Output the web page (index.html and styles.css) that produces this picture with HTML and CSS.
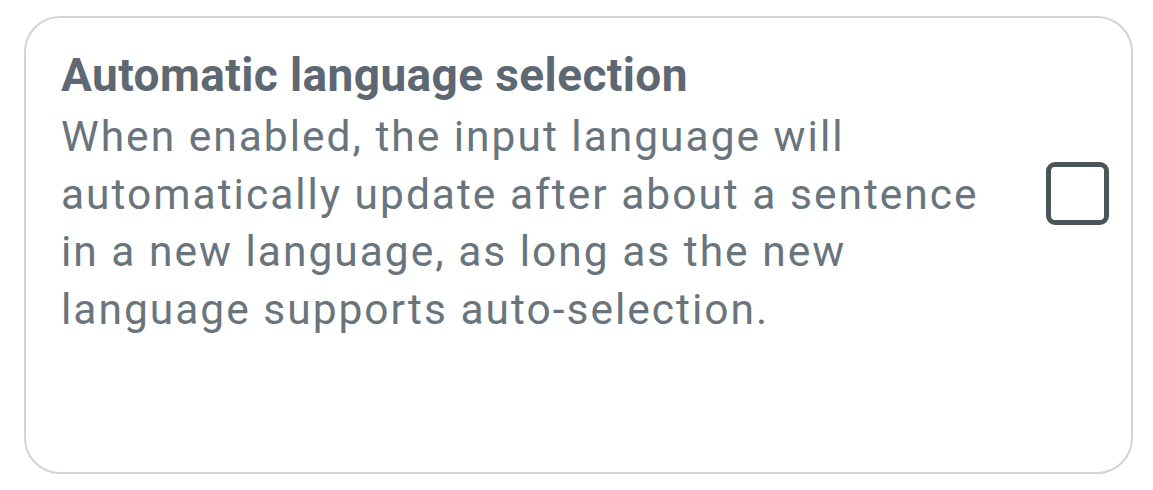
FILE: index.html
```html
<!DOCTYPE html>
<html>
<head>
<meta charset="utf-8">
<link rel="stylesheet" href="styles.css">
</head>
<body>
<div class="card">
  <div class="row">
    <div class="text">
      <div class="title">Automatic language selection</div>
      <div class="desc">When enabled, the input language will automatically update after about a sentence in a new language, as long as the new language supports auto-selection.</div>
    </div>
    <div class="checkbox"></div>
  </div>
</div>
</body>
</html>
```
FILE: styles.css
```css
html, body {
  margin: 0;
  padding: 0;
  background: #ffffff;
}
body {
  font-family: Roboto, "Noto Sans", sans-serif;
}
.card {
  box-sizing: border-box;
  margin: 16px 0 0 24px;
  width: 1109px;
  height: 458px;
  border: 2px solid #d4d4d4;
  border-radius: 36px;
  padding: 31px 22px 0 35px;
}
.row {
  display: flex;
  align-items: center;
}
.text {
  flex: 1;
}
.title {
  font-size: 46px;
  font-weight: 700;
  line-height: 53px;
  letter-spacing: 0.4px;
  color: #5d6872;
}
.desc {
  width: 955px;
  margin-top: 6px;
  font-size: 42.5px;
  letter-spacing: 2px;
  line-height: 57.5px;
  color: #69747d;
}
.checkbox {
  box-sizing: border-box;
  width: 63px;
  height: 63px;
  border: 5.5px solid #4a5459;
  border-radius: 9px;
  flex: none;
}
```
